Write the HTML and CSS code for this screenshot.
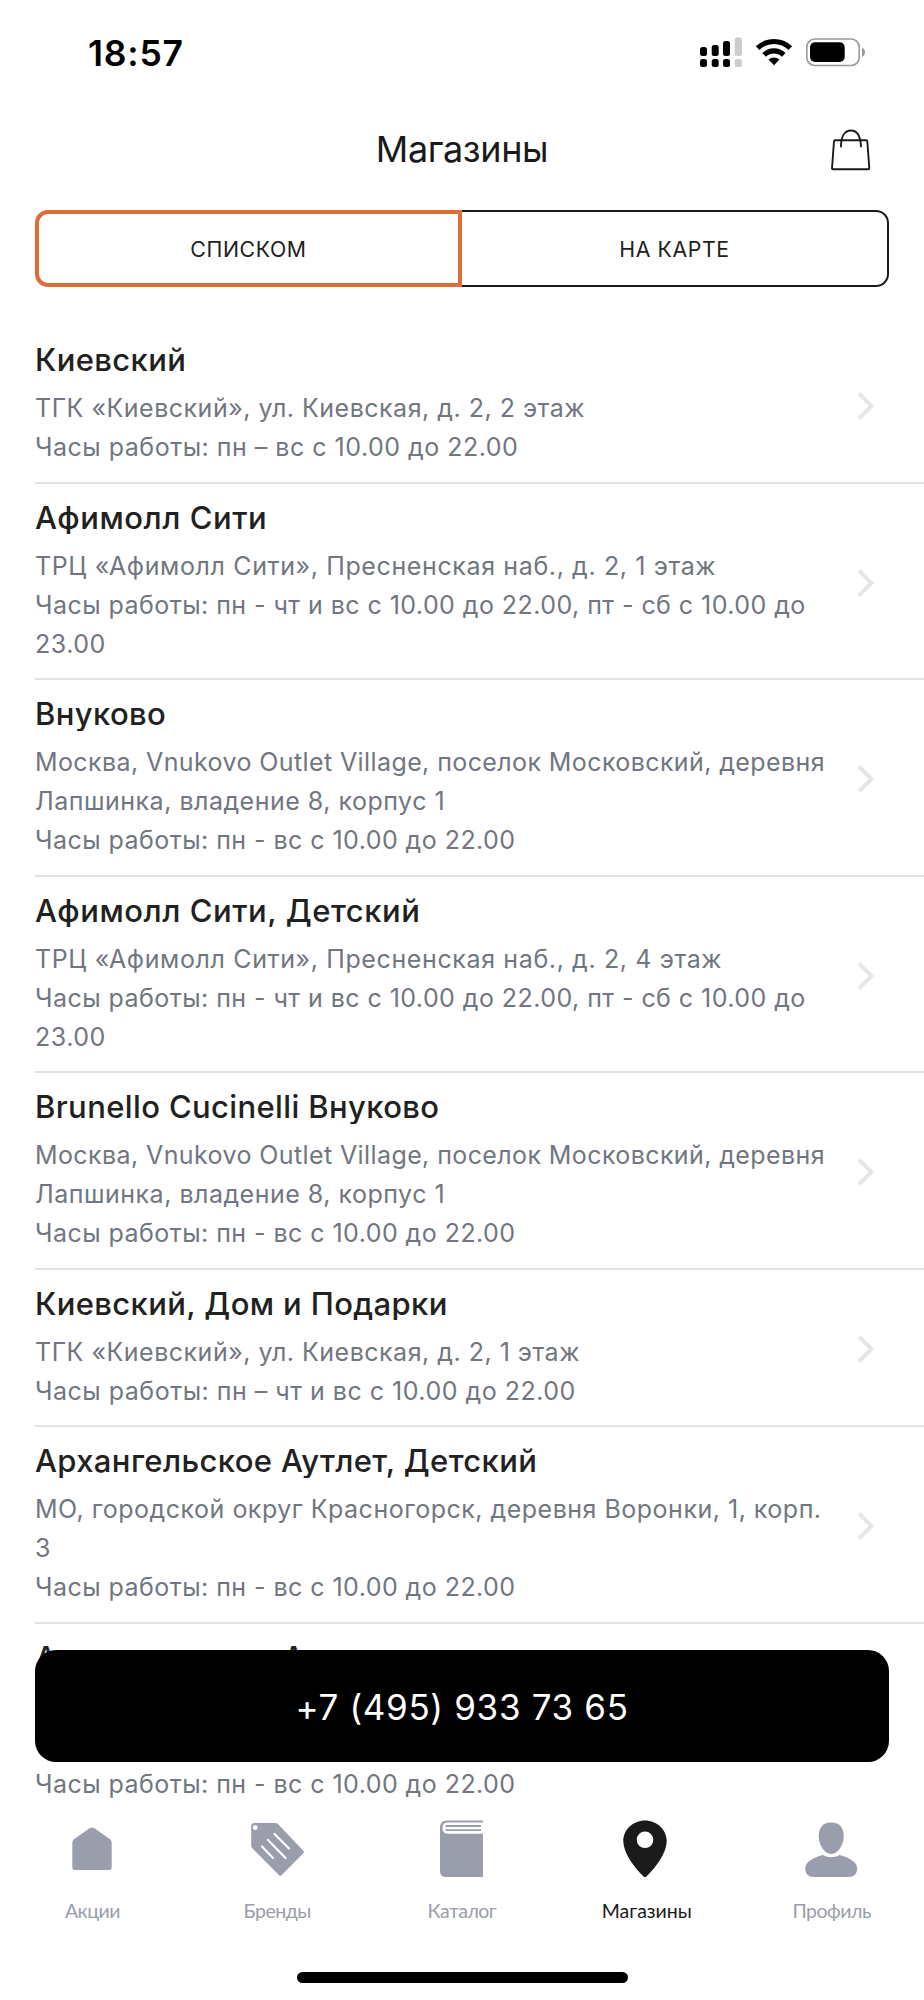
FILE: index.html
```html
<!DOCTYPE html>
<html lang="ru">
<head>
<meta charset="utf-8">
<title>Магазины</title>
<link rel="stylesheet" href="styles.css">
</head>
<body>
<div class="screen">
  <div class="status">
    <span class="time">18:57</span>
    <svg class="status-icons" width="168" height="32" viewBox="0 0 168 32">
      <g>
        <rect x="0" y="10" width="7" height="9" rx="2.5"/><rect x="11.7" y="8" width="7" height="11" rx="2.5"/><rect x="23" y="4" width="7" height="15" rx="2.5"/>
        <rect x="0" y="22" width="7" height="8" rx="2.5"/><rect x="11.7" y="22" width="7" height="8" rx="2.5"/><rect x="23" y="22" width="7" height="8" rx="2.5"/>
      </g>
      <g fill="#ccc"><rect x="34.7" y="0.5" width="7.3" height="18.5" rx="2.5"/><rect x="34.7" y="22" width="7.3" height="8" rx="2.5"/></g>
      <path d="M55.8 9.300a26 26 0 0 1 36.300 0l-3.600 3.700a20.500 20.500 0 0 0-29.100 0z"/>
      <path d="M62.300 16a16.500 16.500 0 0 1 23.300 0l-3.700 3.700a11.200 11.200 0 0 0-15.900 0z"/>
      <path d="M68.500 22.600a7.800 7.800 0 0 1 10.900 0l-5.400 5.600z"/>
      <rect x="106.8" y="2" width="52.4" height="26.5" rx="8" fill="none" stroke="#999" stroke-width="1.6"/>
      <rect x="110" y="5.3" width="34.7" height="19.700" rx="5"/>
      <path d="M162 10.800q3 1.300 3 4.500t-3 4.500z" fill="#999"/>
    </svg>
  </div>
  <header class="header">
    <h1 class="title">Магазины</h1>
    <svg class="bag" width="40" height="42" viewBox="0 0 40 42" fill="none" stroke="#1a1a1a" stroke-width="1.9" stroke-linejoin="round" stroke-linecap="round">
      <path d="M3 12.300q.1-1 1-1h31.300q.9 0 1 1l2 27q0 .9-1 .9H2q-1 0-1-.9z"/>
      <path d="M10 17.500C10 7 14 1.500 20 1.500s9.500 5.500 10 16"/>
    </svg>
  </header>
  <div class="switch">
    <div class="seg seg-active">СПИСКОМ</div>
    <div class="seg">НА КАРТЕ</div>
  </div>
  <main class="list">
    <article class="store"><div class="info"><h2 class="name">Киевский</h2><p class="text">ТГК «Киевский», ул. Киевская, д. 2, 2 этаж<br>Часы работы: пн – вс с 10.00 до 22.00</p></div><svg class="chev" viewBox="0 0 18 28"><path d="M2 1.500 14.500 14 2 26.500"/></svg></article>
    <article class="store"><div class="info"><h2 class="name name-loose">Афимолл Сити</h2><p class="text"><span class="loose">ТРЦ «Афимолл Сити», Пресненская наб., д. 2, 1 этаж</span><br><span class="hours">Часы работы: пн - чт и вс с 10.00 до 22.00, пт - сб с 10.00 до</span><br>23.00</p></div><svg class="chev" viewBox="0 0 18 28"><path d="M2 1.500 14.500 14 2 26.500"/></svg></article>
    <article class="store"><div class="info"><h2 class="name">Внуково</h2><p class="text"><span class="snug">Москва, Vnukovo Outlet Village, поселок Московский, деревня</span><br>Лапшинка, владение 8, корпус 1<br><span class="hours">Часы работы: пн - вс с 10.00 до 22.00</span></p></div><svg class="chev" viewBox="0 0 18 28"><path d="M2 1.500 14.500 14 2 26.500"/></svg></article>
    <article class="store"><div class="info"><h2 class="name name-loose">Афимолл Сити, Детский</h2><p class="text"><span class="loose">ТРЦ «Афимолл Сити», Пресненская наб., д. 2, 4 этаж</span><br><span class="hours">Часы работы: пн - чт и вс с 10.00 до 22.00, пт - сб с 10.00 до</span><br>23.00</p></div><svg class="chev" viewBox="0 0 18 28"><path d="M2 1.500 14.500 14 2 26.500"/></svg></article>
    <article class="store"><div class="info"><h2 class="name">Brunello Cucinelli Внуково</h2><p class="text"><span class="snug">Москва, Vnukovo Outlet Village, поселок Московский, деревня</span><br>Лапшинка, владение 8, корпус 1<br><span class="hours">Часы работы: пн - вс с 10.00 до 22.00</span></p></div><svg class="chev" viewBox="0 0 18 28"><path d="M2 1.500 14.500 14 2 26.500"/></svg></article>
    <article class="store"><div class="info"><h2 class="name">Киевский, Дом и Подарки</h2><p class="text">ТГК «Киевский», ул. Киевская, д. 2, 1 этаж<br>Часы работы: пн – чт и вс с 10.00 до 22.00</p></div><svg class="chev" viewBox="0 0 18 28"><path d="M2 1.500 14.500 14 2 26.500"/></svg></article>
    <article class="store"><div class="info"><h2 class="name">Архангельское Аутлет, Детский</h2><p class="text">МО, городской округ Красногорск, деревня Воронки, 1, корп.<br>3<br><span class="hours">Часы работы: пн - вс с 10.00 до 22.00</span></p></div><svg class="chev" viewBox="0 0 18 28"><path d="M2 1.500 14.500 14 2 26.500"/></svg></article>
    <article class="store store-last"><div class="info"><h2 class="name name-wide">Архангельское Аутлет</h2><p class="text"><br><br><span class="hours">Часы работы: пн - вс с 10.00 до 22.00</span></p></div></article>
  </main>
  <a class="call">+7 (495) 933 73 65</a>
  <nav class="tabs">
    <div class="tab"><svg width="60" height="60" viewBox="0 0 60 60"><path d="M27.500 8.200q2.500-1.600 5 0L48 19.300q1.700 1.400 1.700 3.500V47q0 3-3 3H13.300q-3 0-3-3V22.800q0-2.100 1.700-3.500z"/></svg><span>Акции</span></div>
    <div class="tab"><svg width="60" height="60" viewBox="-1 0 60 60"><path d="M6.500 3h20.500q2 0 3.400 1.400L55.300 30.800q1.200 1.200 0 2.400L33.500 55.200q-1.200 1.200-2.400 0L4.200 28.300q-1-1.200-1-3V6.300q0-3.300 3.300-3.300z"/><circle cx="7.300" cy="7.700" r="2.400" fill="#fff"/><path d="M26.500 14 41 28.500M20 20 37.500 38M14 26.500 25 38" stroke="#fff" stroke-width="2.200" stroke-linecap="round"/></svg><span>Бренды</span></div>
    <div class="tab"><svg width="60" height="60" viewBox="0 0 60 60"><path d="M51 13.800V57H14q-6 0-6-6V8q0-7.500 7-7.500h36v2H15.500q-5 0-5 5.600t5 5.700z"/><path d="M13.500 6h35.500M13.500 10.200h35.500" stroke="#9a9dab" stroke-width="1.800"/></svg><span>Каталог</span></div>
    <div class="tab tab-active"><svg width="60" height="60" viewBox="2 0 60 60"><path fill-rule="evenodd" d="M30 .5c12 0 21.700 9.300 21.700 20.500C51.700 33 41 47 31.500 56.500q-1.500 1.300-3 0C19 47 8.300 33 8.300 21 8.300 9.800 18 .5 30 .5zm0 11a8.300 8.300 0 1 0 0 16.600 8.300 8.300 0 0 0 0-16.600z"/></svg><span>Магазины</span></div>
    <div class="tab"><svg width="60" height="60" viewBox="0.8 0 60 60"><path d="M30 2.500c9 0 12.500 6 12.500 14S37 34 30 34s-12.500-9.500-12.500-17.500 3.500-14 12.500-14z"/><path d="M21.500 35q8.500 4.500 17 0Q56 40 56 48.500q0 8.500-9 8.500H13q-9 0-9-8.500Q4 40 21.500 35z"/></svg><span>Профиль</span></div>
  </nav>
  <div class="home"></div>
</div>
</body>
</html>
```
FILE: styles.css
```css
* { box-sizing: border-box; }
body { margin: 0; background: #fff; font-family: Inter, "Liberation Sans", sans-serif; color: #212121; }
.screen { position: relative; width: 924px; height: 2000px; overflow: hidden; background: #fff; }
.status { height: 110px; display: flex; justify-content: space-between; padding: 32px 56px 0 88px; }
.time { font-size: 35.5px; line-height: 43px; font-weight: 600; color: #000; letter-spacing: .8px; }
.status-icons { margin: 5px 0 0; }
.header { height: 100px; display: grid; grid-template-columns: 100px 1fr 100px; padding: 0; }
.title { grid-column: 2; margin: 18px 0 0; text-align: center; font-size: 36px; line-height: 43px; font-weight: 400; color: #1a1a1a; letter-spacing: -.4px; }
.bag { margin: 18.5px 0 0 7px; }
.switch { height: 77px; margin: 0 35px; display: flex; }
.seg { flex: none; width: 50%; display: flex; align-items: center; justify-content: center; border: 2px solid #1a1a1a; border-left: 0; border-radius: 0 13px 13px 0; font-size: 21.3px; font-weight: 400; letter-spacing: .6px; }
.seg-active { border: 4px solid #df6d38; border-radius: 13px 0 0 13px; }
.list { margin-top: 39px; }
.store { margin-left: 35px; padding: 15px 49px 14.5px 0; border-bottom: 2px solid #e1e2e7; display: flex; align-items: center; justify-content: space-between; }
.store-last { border-bottom: 0; }
.name { margin: 0 0 12.5px; height: 35.5px; overflow: hidden; font-size: 31px; line-height: 37px; font-weight: 500; letter-spacing: .38px; white-space: nowrap; }
.name-loose { letter-spacing: .55px; }
.name-wide { letter-spacing: .5px; }
.text { margin: 0; font-size: 25px; line-height: 39px; color: #717680; letter-spacing: .5px; white-space: nowrap; }
.loose { letter-spacing: .62px; }
.hours { letter-spacing: .45px; }
.snug { letter-spacing: .4px; }
.chev { flex: none; width: 18px; height: 28px; margin-top: 3px; fill: none; stroke: #e5e6e9; stroke-width: 4; }
.info { flex: none; width: 800px; }
.call { position: absolute; left: 35px; top: 1650px; width: 854px; height: 112px; padding-top: 1px; border-radius: 21px; background: #000; color: #fff; display: flex; align-items: center; justify-content: center; font-size: 35px; letter-spacing: .65px; }
.tabs { position: absolute; left: 0; right: 0; top: 1805px; height: 195px; background: #fff; display: grid; grid-template-columns: repeat(5, 1fr); padding-top: 15px; }
.tab { display: flex; flex-direction: column; align-items: center; gap: 19px; font-family: Lato, "Open Sans", sans-serif; font-size: 19.5px; line-height: 24px; letter-spacing: -.5px; color: #9a9dab; fill: #9a9dab; }
.tab-active { color: #1a1a1a; fill: #1a1a1a; letter-spacing: 0; }
.home { position: absolute; left: 297px; top: 1971.5px; width: 331px; height: 11px; border-radius: 6px; background: #000; }
```
